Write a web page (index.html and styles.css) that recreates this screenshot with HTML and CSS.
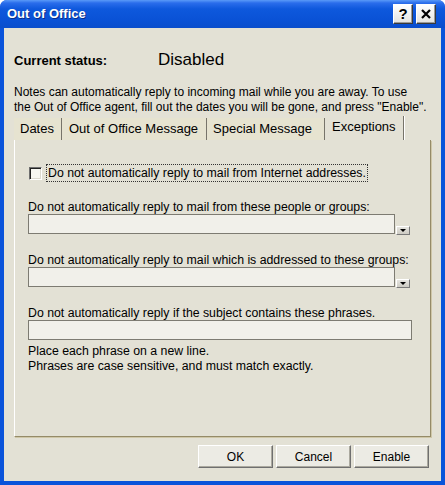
FILE: index.html
```html
<!DOCTYPE html>
<html>
<head>
<meta charset="utf-8">
<title>Out of Office</title>
<link rel="stylesheet" href="styles.css">
</head>
<body>
<div class="window">
  <div class="titlebar">
    <span class="title">Out of Office</span>
    <div class="controls">
      <span class="ctl ctl-help">?</span>
      <span class="ctl ctl-close">
        <svg width="10" height="10" viewBox="0 0 10 10"><path d="M1 1 L9 9 M9 1 L1 9" stroke="#000" stroke-width="2.2" fill="none"/></svg>
      </span>
    </div>
  </div>
  <div class="client">
    <div class="status">
      <span class="status-label">Current status:</span>
      <span class="status-value">Disabled</span>
    </div>
    <p class="intro">Notes can automatically reply to incoming mail while you are away. To use<br>the Out of Office agent, fill out the dates you will be gone, and press "Enable".</p>
    <div class="tabs">
      <span class="tab tab-dates">Dates</span>
      <span class="tab tab-message">Out of Office Message</span>
      <span class="tab tab-special">Special Message</span>
      <span class="tab tab-exceptions active">Exceptions</span>
    </div>
    <div class="panel">
      <div class="checkrow">
        <span class="checkbox"></span>
        <span class="checklabel">Do not automatically reply to mail from Internet addresses.</span>
      </div>
      <div class="field field-first">
        <div class="field-label">Do not automatically reply to mail from these people or groups:</div>
        <div class="field-row">
          <span class="input input-short"></span>
          <span class="dropbtn"><span class="arrow"></span></span>
        </div>
      </div>
      <div class="field">
        <div class="field-label">Do not automatically reply to mail which is addressed to these groups:</div>
        <div class="field-row">
          <span class="input input-short"></span>
          <span class="dropbtn"><span class="arrow"></span></span>
        </div>
      </div>
      <div class="field">
        <div class="field-label">Do not automatically reply if the subject contains these phrases.</div>
        <div class="field-row">
          <span class="input input-long"></span>
        </div>
      </div>
      <p class="help">Place each phrase on a new line.<br>Phrases are case sensitive, and must match exactly.</p>
    </div>
    <div class="actions">
      <button class="btn">OK</button>
      <button class="btn">Cancel</button>
      <button class="btn">Enable</button>
    </div>
  </div>
</div>
</body>
</html>
```
FILE: styles.css
```css
* { box-sizing: border-box; }
body {
  margin: 0;
  font-family: "Liberation Sans", Arial, sans-serif;
  font-size: 12px;
  color: #000;
  background: #fff;
}
.window {
  width: 445px;
  height: 485px;
  background: #0A53DA;
  border-radius: 7px 7px 0 0;
  display: flex;
  flex-direction: column;
  overflow: hidden;
}
.titlebar {
  height: 28px;
  flex: none;
  display: flex;
  align-items: center;
  padding: 0 9px 0 7px;
  background: linear-gradient(#5A9AF8 0, #2A6DEB 3px, #0E58DC 9px, #0A52D6 20px, #0A4ECC 28px);
}
.title {
  flex: 1;
  color: #fff;
  font-weight: bold;
  font-size: 13px;
  line-height: 28px;
  text-shadow: 1px 1px 0 #0A2F8A;
}
.controls { display: flex; gap: 3px; }
.ctl {
  width: 20px;
  height: 20px;
  display: flex;
  align-items: center;
  justify-content: center;
  background: linear-gradient(#FFFFFF, #E4E4E0);
  border: 1px solid;
  border-color: #FFFFFF #3A3A3A #3A3A3A #FFFFFF;
  box-shadow: inset -1px -1px 0 #9A9A9A;
  font-weight: bold;
  font-size: 15px;
  line-height: 18px;
}
.client {
  flex: 1;
  margin: 0 4px 4px;
  background: #E3E1D5;
  padding: 22px 10px 0;
  display: flex;
  flex-direction: column;
}
.status {
  display: flex;
  align-items: baseline;
  height: 20px;
}
.status-label {
  width: 144px;
  font-weight: bold;
  font-size: 13px;
  line-height: 16px;
}
.status-value {
  font-size: 17px;
  line-height: 20px;
}
.intro {
  margin: 15px 0 1px;
  line-height: 15px;
  white-space: nowrap;
}
.tabs {
  display: flex;
  align-items: flex-end;
  height: 24px;
  flex: none;
}
.tab {
  height: 22px;
  line-height: 22px;
  font-size: 13px;
  padding-left: 6px;
  background: #E6E3D0;
  border-right: 1px solid #77746A;
  box-shadow: 1px 0 0 #FFFFFF;
  white-space: nowrap;
}
.tab-dates { width: 48px; }
.tab-message { width: 145px; padding-left: 7px; }
.tab-special { width: 118px; }
.tab-exceptions { width: 79px; padding-left: 7px; }
.tab.active {
  height: 24px;
  padding-bottom: 2px;
  background: #E3E1D5;
}
.panel {
  flex: none;
  height: 297px;
  font-size: 12.3px;
  border-left: 1px solid #FFFFFF;
  border-right: 1px solid #958B68;
  border-bottom: 1px solid #958B68;
  box-shadow: 1px 1px 0 #CFC7A8;
  padding: 24px 0 0 13px;
}
.checkrow {
  display: flex;
  align-items: center;
  height: 18px;
}
.checkbox {
  width: 13px;
  height: 13px;
  margin-left: 1px;
  border: 1px solid;
  border-color: #6E6E6E #FFFFFF #FFFFFF #6E6E6E;
  box-shadow: inset 1px 1px 0 #222222, inset -1px -1px 0 #DCDAD0;
  background: #F7F7F2;
}
.checklabel {
  margin-left: 4px;
  border: 1px dotted #333333;
  padding: 1px 1px;
  line-height: 14px;
}
.field { margin-top: 20px; }
.field-first { margin-top: 19px; }
.field-label {
  line-height: 13px;
  white-space: nowrap;
}
.field-row {
  display: flex;
  align-items: flex-end;
}
.input {
  display: block;
  height: 20px;
  border: 1px solid #7D7B72;
  background: #F1F0EA;
}
.input-short { width: 367px; }
.input-long { width: 384px; }
.dropbtn {
  width: 14px;
  height: 9px;
  margin-left: 1px;
  margin-bottom: -1px;
  border: 1px solid;
  border-color: #FFFFFF #7A7A7A #7A7A7A #FFFFFF;
  background: linear-gradient(#E6E5E0, #CDCBC3);
  display: flex;
  align-items: center;
  justify-content: center;
}
.arrow {
  width: 0;
  height: 0;
  border-left: 3px solid transparent;
  border-right: 3px solid transparent;
  border-top: 3px solid #000;
}
.help {
  margin: 4px 0 0;
  line-height: 15px;
}
.actions {
  display: flex;
  justify-content: flex-end;
  gap: 3px;
  margin-top: 8px;
  padding-right: 2px;
}
.btn {
  width: 75px;
  height: 23px;
  font-family: "Liberation Sans", Arial, sans-serif;
  font-size: 12px;
  color: #000;
  background: #ECEBE4;
  border: 1px solid;
  border-color: #FFFFFF #6F6F6F #6F6F6F #FFFFFF;
  box-shadow: inset -1px -1px 0 #ABA99F;
  padding: 0;
}
```
